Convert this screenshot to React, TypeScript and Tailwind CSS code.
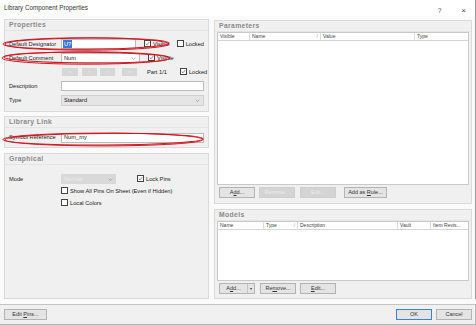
import * as React from "react"

const font = { fontFamily: '"Liberation Sans", Arial, sans-serif' }

function Check({ checked }: { checked?: boolean }) {
    return (
        <span className="relative inline-flex h-[7px] w-[7px] shrink-0 items-center justify-center border border-[#444] bg-white">
            {checked && (
                <svg viewBox="0 0 8 8" className="h-[7px] w-[7px]">
                    <path d="M1.2 4.2 L3.1 6 L6.8 1.8" fill="none" stroke="#222" strokeWidth="0.9" />
                </svg>
            )}
        </span>
    )
}

function CheckLabel({ checked, label }: { checked?: boolean; label: string }) {
    return (
        <span className="flex shrink-0 items-center gap-[2px] whitespace-nowrap">
            <Check checked={checked} />
            <span>{label}</span>
        </span>
    )
}

function Chevron() {
    return (
        <svg viewBox="0 0 8 5" className="h-[3px] w-[5px]">
            <path d="M1 1 L4 4 L7 1" fill="none" stroke="#777" strokeWidth="0.9" />
        </svg>
    )
}

function Group({ title, className, children }: { title: string; className?: string; children?: React.ReactNode }) {
    return (
        <div className={"flex flex-col border border-[#dadada] bg-[#f0f0f0] " + (className ?? "")}>
            <div className="flex h-[11px] shrink-0 items-center border-b border-[#e4e4e4] px-[4px] pt-[1px] text-[6.8px] font-semibold tracking-[0.35px] text-[#8a8a8a]">
                {title}
            </div>
            {children}
        </div>
    )
}

function Btn({ children, disabled, w, className }: { children: React.ReactNode; disabled?: boolean; w: string; className?: string }) {
    return (
        <div
            className={
                "flex h-[11px] items-center justify-center border text-[5.5px] " +
                w + " " +
                (disabled ? "border-[#cfcfcf] bg-[#d4d4d4] text-[#ececec]" : "border-[#b3b3b3] bg-[#e4e4e4] text-[#333]") +
                " " + (className ?? "")
            }
        >
            {children}
        </div>
    )
}

function Label({ children }: { children: React.ReactNode }) {
    return <span className="w-[52px] shrink-0 whitespace-nowrap">{children}</span>
}

function NavBtn({ children, className }: { children: React.ReactNode; className?: string }) {
    return (
        <div className={"flex h-[8px] w-[15px] shrink-0 items-center justify-center bg-[#d6d6d6] text-[4px] text-[#eee] " + (className ?? "")}>
            {children}
        </div>
    )
}

function Table({ cols }: { cols: { name: string; w: string; sort?: boolean }[] }) {
    return (
        <div className="mx-[2px] flex flex-1 flex-col border border-[#c9c9c9] bg-white">
            <div className="flex h-[8px] shrink-0 border-b border-[#d6d6d6] text-[5px] text-[#444]">
                {cols.map((c, i) => (
                    <div
                        key={c.name}
                        className={
                            "flex items-center justify-between px-[2px] " +
                            c.w + (i < cols.length - 1 ? " border-r border-[#dcdcdc]" : "")
                        }
                    >
                        <span className="whitespace-nowrap">{c.name}</span>
                        {c.sort && <span className="text-[#999]">/</span>}
                    </div>
                ))}
            </div>
        </div>
    )
}

export default function App() {
    return (
        <div
            className="relative flex h-[325px] w-[476px] flex-col overflow-hidden bg-[#fafafa] text-[5.7px] text-[#222]"
            style={font}
        >
            {/* title bar */}
            <div className="flex h-[16px] shrink-0 items-start justify-between border-r border-[#9a9a9a] bg-white pl-[4px] pr-[9px] pt-[3px]">
                <span className="text-[6.3px] text-[#333]">Library Component Properties</span>
                <div className="flex items-center gap-[20px] pt-[3px] text-[6.5px] text-[#444]">
                    <span>?</span>
                    <span className="text-[8px] leading-none">×</span>
                </div>
            </div>

            {/* body */}
            <div className="flex flex-1 gap-[5px] border-r border-[#9a9a9a] pl-[4px] pr-[3px] pt-[3px]">
                {/* left column */}
                <div className="flex w-[205px] flex-col">
                    <Group title="Properties" className="h-[93px]">
                        <div className="flex flex-col px-[4px] pt-[6px]">
                            <div className="flex h-[14px] items-center">
                                <Label>Default Designator</Label>
                                <div className="flex h-[10px] w-[79px] items-center border border-[#bdbdbd] bg-white px-[1px]">
                                    <span className="bg-[#3b78d8] px-[1px] text-white">U?</span>
                                </div>
                                <span className="ml-[8px]">
                                    <CheckLabel checked label="Visible" />
                                </span>
                                <span className="ml-[7px]">
                                    <CheckLabel label="Locked" />
                                </span>
                            </div>
                            <div className="flex h-[14px] items-center">
                                <Label>Default Comment</Label>
                                <div className="flex h-[10px] w-[79px] items-center justify-between border border-[#bdbdbd] bg-white pl-[2px] pr-[3px]">
                                    <span>Num</span>
                                    <Chevron />
                                </div>
                                <span className="ml-[8px]">
                                    <CheckLabel checked label="Visible" />
                                </span>
                            </div>
                            <div className="flex h-[14px] items-center">
                                <span className="w-[53px] shrink-0" />
                                <NavBtn className="w-[16px]">&lt;&lt;</NavBtn>
                                <NavBtn className="ml-[4px]">&lt;</NavBtn>
                                <NavBtn className="ml-[3px]">&gt;</NavBtn>
                                <NavBtn className="ml-[7px]">&gt;&gt;</NavBtn>
                                <span className="ml-[10px] shrink-0 whitespace-nowrap">Part 1/1</span>
                                <span className="ml-[13px]">
                                    <CheckLabel checked label="Locked" />
                                </span>
                            </div>
                            <div className="flex h-[14px] items-center">
                                <Label>Description</Label>
                                <div className="h-[10px] flex-1 border border-[#bdbdbd] bg-white" />
                            </div>
                            <div className="flex h-[14px] items-center">
                                <Label>Type</Label>
                                <div className="flex h-[11px] flex-1 items-center justify-between border border-[#d0d0d0] bg-[#e5e5e5] pl-[2px] pr-[3px]">
                                    <span>Standard</span>
                                    <Chevron />
                                </div>
                            </div>
                        </div>
                    </Group>

                    <Group title="Library Link" className="mt-[4px] h-[32px]">
                        <div className="flex h-[20px] items-center px-[4px]">
                            <Label>Symbol Reference</Label>
                            <div className="flex h-[10px] flex-1 items-center border border-[#bdbdbd] bg-white px-[2px]">
                                Num_my
                            </div>
                        </div>
                    </Group>

                    <Group title="Graphical" className="mt-[5px] flex-1">
                        <div className="flex flex-col px-[4px] pt-[8px]">
                            <div className="flex h-[12px] items-center">
                                <Label>Mode</Label>
                                <div className="flex h-[10px] w-[55px] items-center justify-between bg-[#d9d9d9] pl-[3px] pr-[3px] text-[#ececec]">
                                    <span>Normal</span>
                                    <Chevron />
                                </div>
                                <span className="ml-[21px]">
                                    <CheckLabel checked label="Lock Pins" />
                                </span>
                            </div>
                            <div className="flex h-[12px] items-center">
                                <span className="w-[52px] shrink-0" />
                                <CheckLabel label="Show All Pins On Sheet (Even if Hidden)" />
                            </div>
                            <div className="flex h-[12px] items-center">
                                <span className="w-[52px] shrink-0" />
                                <CheckLabel label="Local Colors" />
                            </div>
                        </div>
                    </Group>
                </div>

                {/* right column */}
                <div className="flex flex-1 flex-col pt-[1px]">
                    <Group title="Parameters" className="flex-1 pb-[5px]">
                        <Table
                            cols={[
                                { name: "Visible", w: "w-[32px]" },
                                { name: "Name", w: "w-[71px]", sort: true },
                                { name: "Value", w: "w-[94px]" },
                                { name: "Type", w: "flex-1" },
                            ]}
                        />
                        <div className="flex h-[13px] shrink-0 items-end px-[4px]">
                            <Btn w="w-[36px]"><span>A<u>d</u>d...</span></Btn>
                            <Btn w="w-[36px]" disabled className="ml-[4px]">Remove...</Btn>
                            <Btn w="w-[36px]" disabled className="ml-[5px]">Edit...</Btn>
                            <Btn w="w-[43px]" className="ml-[8px]"><span>Add as <u>R</u>ule...</span></Btn>
                        </div>
                    </Group>

                    <Group title="Models" className="mt-[5px] h-[90px] pb-[4px]">
                        <Table
                            cols={[
                                { name: "Name", w: "w-[46px]" },
                                { name: "Type", w: "w-[34px]", sort: true },
                                { name: "Description", w: "w-[100px]" },
                                { name: "Vault", w: "w-[33px]" },
                                { name: "Item Revis...", w: "flex-1" },
                            ]}
                        />
                        <div className="flex h-[13px] shrink-0 items-end px-[4px]">
                            <div className="flex h-[11px] w-[36px] items-center border border-[#b3b3b3] bg-[#e4e4e4] text-[5.5px] text-[#333]">
                                <span className="flex-1 text-center">A<u>d</u>d...</span>
                                <span className="flex h-full w-[7px] items-center justify-center border-l border-[#c4c4c4] text-[4px]">▾</span>
                            </div>
                            <Btn w="w-[36px]" className="ml-[5px]"><span>Re<u>m</u>ove...</span></Btn>
                            <Btn w="w-[36px]" className="ml-[4px]"><span><u>E</u>dit...</span></Btn>
                        </div>
                    </Group>
                </div>
            </div>

            {/* footer */}
            <div className="mt-[5px] flex h-[21px] shrink-0 items-center justify-between border-b border-r border-t border-[#b8b8b8] border-t-[#c4c4c4] bg-[#f0f0f0] pl-[4px] pr-[3px]">
                <Btn w="w-[43px]"><span>Edit <u>P</u>ins...</span></Btn>
                <div className="flex gap-[4px]">
                    <Btn w="w-[36px]" className="!border-[#3c7fd6]">OK</Btn>
                    <Btn w="w-[36px]">Cancel</Btn>
                </div>
            </div>

            {/* annotation marks */}
            <svg className="pointer-events-none absolute left-0 top-0" width="476" height="325">
                <g fill="none" stroke="#d4151f" strokeWidth="1">
                    <ellipse cx="86" cy="44" rx="83" ry="6.2" />
                    <ellipse cx="87" cy="43.6" rx="82" ry="5.6" transform="rotate(-0.4 87 43.6)" />
                    <ellipse cx="86" cy="58" rx="84" ry="6.2" />
                    <ellipse cx="87" cy="57.6" rx="83" ry="5.4" transform="rotate(0.4 87 57.6)" />
                    <ellipse cx="103" cy="139.5" rx="100" ry="6.4" />
                    <ellipse cx="104" cy="139.2" rx="99" ry="5.8" transform="rotate(-0.3 104 139.2)" />
                </g>
            </svg>
        </div>
    )
}
